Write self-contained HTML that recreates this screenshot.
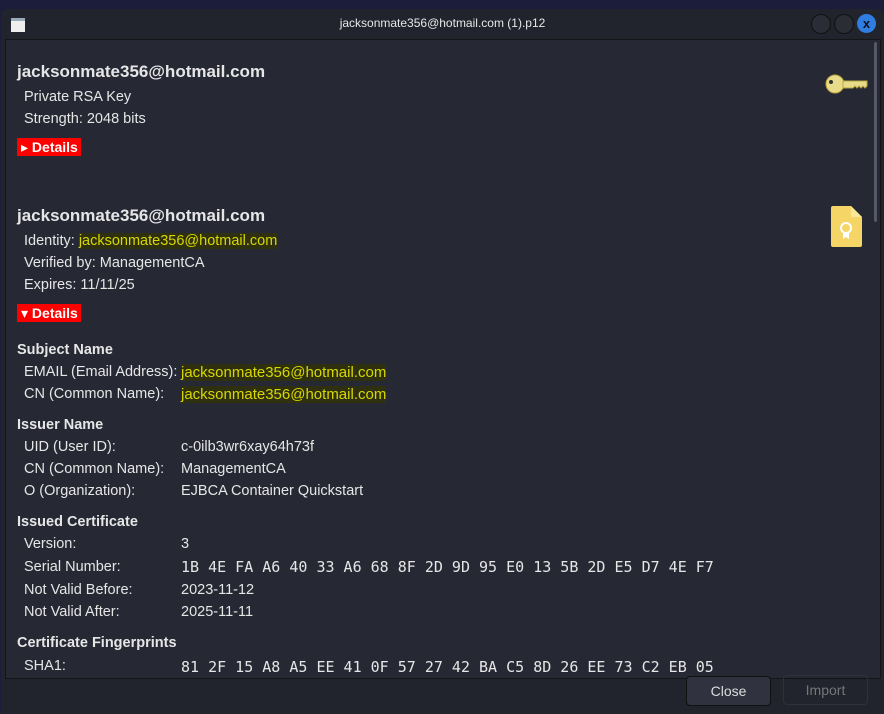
<html><head><style>
body{margin:0;width:884px;height:714px;background:#1b1d3a;overflow:hidden;font-family:"Liberation Sans","DejaVu Sans",sans-serif;color:#e6e6e6;position:relative}
.win{position:absolute;left:1px;top:9px;width:883px;height:705px;background:#21232d;border-radius:6px 6px 0 0}
.title{position:absolute;left:0;top:0;width:883px;height:29px;text-align:center;line-height:29px;font-size:12px;color:#e8e8e8}
.frame{position:absolute;left:4px;top:30px;width:874px;height:638px;background:#262834;border:1px solid #141519;overflow:hidden}
.t{position:absolute;white-space:nowrap;font-size:14.5px}
.h{font-weight:bold;font-size:17px}
.s{font-weight:bold;font-size:14.5px}
.y{color:#d8d800;background:#2e3010}
.m{font-family:"DejaVu Sans Mono","Liberation Mono",monospace;font-size:15px}
.det{position:absolute;background:#f00;color:#fff;font-weight:bold;font-size:14px;height:18px;line-height:18px;padding:0 3px 0 4px}
.btn{position:absolute;height:28px;line-height:28px;text-align:center;font-size:14px;border-radius:4px}
</style></head><body>
<div class="win">
<div class="title">jacksonmate356@hotmail.com (1).p12</div>
<div style="position:absolute;left:10px;top:9px;width:14px;height:11px;background:#eee;border-top:3px solid #9ab"></div>
<div style="position:absolute;left:810px;top:5px;width:18px;height:18px;border-radius:50%;background:#2a2c36;border:1px solid #111"></div>
<div style="position:absolute;left:833px;top:5px;width:18px;height:18px;border-radius:50%;background:#2a2c36;border:1px solid #111"></div>
<div style="position:absolute;left:856px;top:5px;width:19px;height:19px;border-radius:50%;background:#2f7de1;color:#111;font-weight:bold;font-size:13px;line-height:19px;text-align:center">x</div>
<div class="frame">
<div style="position:absolute;left:868px;top:2px;width:3px;height:180px;background:#555866;border-radius:2px"></div>
<div class="t h" style="left:11px;top:22px">jacksonmate356@hotmail.com</div>
<div class="t" style="left:18px;top:49px">Private RSA Key</div>
<div class="t" style="left:18px;top:71px">Strength: 2048 bits</div>
<div class="det" style="left:11px;top:98px">▸ Details</div>
<svg style="position:absolute;left:819px;top:32px" width="44" height="24"><circle cx="10" cy="12" r="9" fill="#e8dc8a" stroke="#b9a640"/><circle cx="6" cy="10" r="2" fill="#333"/><path d="M18 9h24v5l-2 2-2-2-2 2-2-2-2 2-2-2-2 2h-10z" fill="#e8dc8a" stroke="#b9a640"/></svg>
<div class="t h" style="left:11px;top:166px">jacksonmate356@hotmail.com</div>
<div class="t" style="left:18px;top:193px">Identity: <span class="y">jacksonmate356@hotmail.com</span></div>
<div class="t" style="left:18px;top:215px">Verified by: ManagementCA</div>
<div class="t" style="left:18px;top:237px">Expires: 11/11/25</div>
<div class="det" style="left:11px;top:264px">▾ Details</div>
<svg style="position:absolute;left:824px;top:166px" width="33" height="42"><path d="M1 2Q1 0 3 0H21L32 11V39Q32 41 30 41H3Q1 41 1 39Z" fill="#f5d565"/><path d="M21 0V11H32" fill="#f9e79a"/><circle cx="16" cy="22" r="5" fill="none" stroke="#fff" stroke-width="2"/><path d="M13 26v7l3-2 3 2v-7" fill="#fff"/></svg>
<div class="t s" style="left:11px;top:302px">Subject Name</div>
<div class="t" style="left:18px;top:324px">EMAIL (Email Address):</div><div class="t y" style="left:175px;top:324px;font-size:15px">jacksonmate356@hotmail.com</div>
<div class="t" style="left:18px;top:346px">CN (Common Name):</div><div class="t y" style="left:175px;top:346px;font-size:15px">jacksonmate356@hotmail.com</div>
<div class="t s" style="left:11px;top:377px">Issuer Name</div>
<div class="t" style="left:18px;top:399px">UID (User ID):</div><div class="t" style="left:175px;top:399px">c-0ilb3wr6xay64h73f</div>
<div class="t" style="left:18px;top:421px">CN (Common Name):</div><div class="t" style="left:175px;top:421px">ManagementCA</div>
<div class="t" style="left:18px;top:443px">O (Organization):</div><div class="t" style="left:175px;top:443px">EJBCA Container Quickstart</div>
<div class="t s" style="left:11px;top:474px">Issued Certificate</div>
<div class="t" style="left:18px;top:496px">Version:</div><div class="t" style="left:175px;top:496px">3</div>
<div class="t" style="left:18px;top:519px">Serial Number:</div><div class="t m" style="left:175px;top:518px">1B 4E FA A6 40 33 A6 68 8F 2D 9D 95 E0 13 5B 2D E5 D7 4E F7</div>
<div class="t" style="left:18px;top:542px">Not Valid Before:</div><div class="t" style="left:175px;top:542px">2023-11-12</div>
<div class="t" style="left:18px;top:564px">Not Valid After:</div><div class="t" style="left:175px;top:564px">2025-11-11</div>
<div class="t s" style="left:11px;top:595px">Certificate Fingerprints</div>
<div class="t" style="left:18px;top:618px">SHA1:</div><div class="t m" style="left:175px;top:618px">81 2F 15 A8 A5 EE 41 0F 57 27 42 BA C5 8D 26 EE 73 C2 EB 05</div>
</div>
<div class="btn" style="left:685px;top:667px;width:83px;background:#30323f;border:1px solid #111;color:#ddd">Close</div>
<div class="btn" style="left:782px;top:666px;width:83px;border:1px solid #2e303a;color:#777">Import</div>
</div>
</body></html>
